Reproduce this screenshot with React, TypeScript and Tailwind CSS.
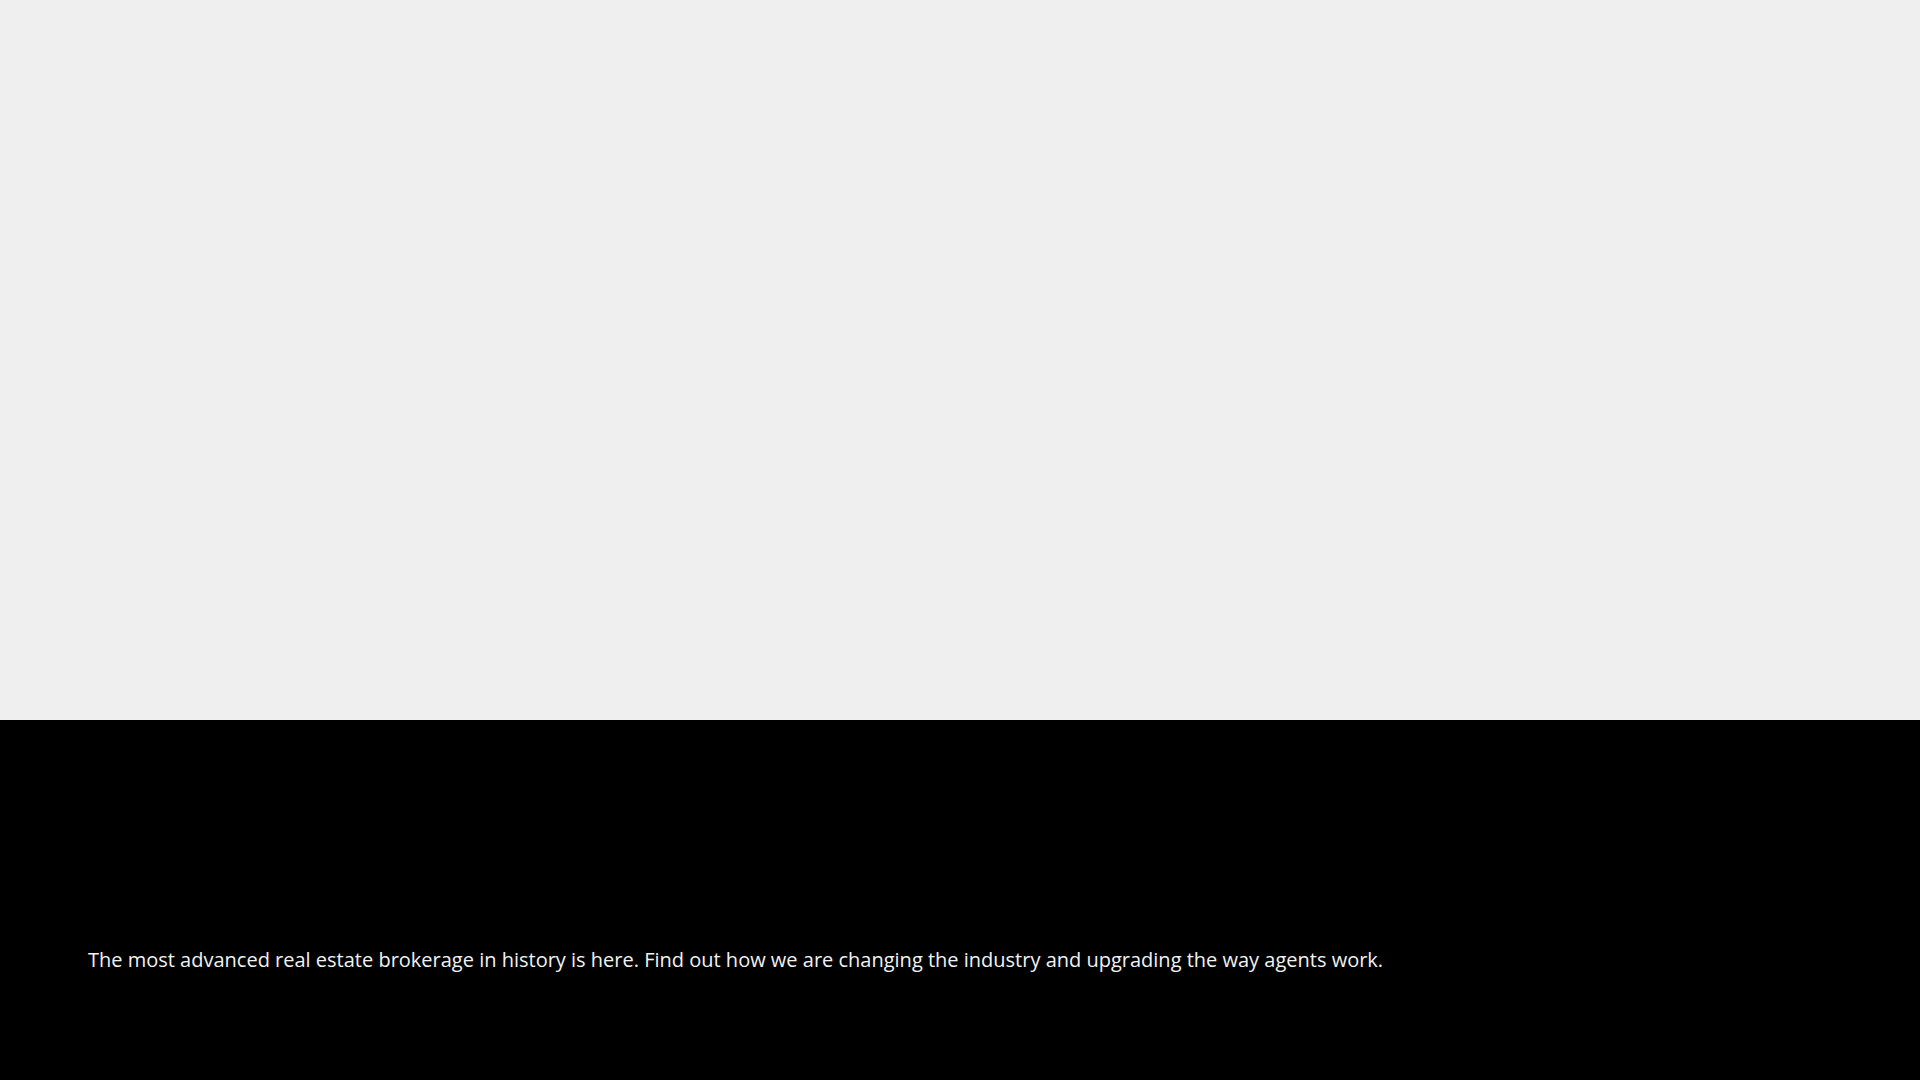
export default function App() {
  return (
    <div className="font-['Open_Sans',sans-serif]">
      <section className="h-[720px] bg-[#efefef]" />
      <section className="min-h-[6840px] bg-black px-[88px] pt-[225px]">
        <p className="text-[20px] leading-[30px] text-[#f2f2f2]">
          The most advanced real estate brokerage in history is here. Find out how we are changing the industry and
          upgrading the way agents work.
        </p>
      </section>
    </div>
  );
}
